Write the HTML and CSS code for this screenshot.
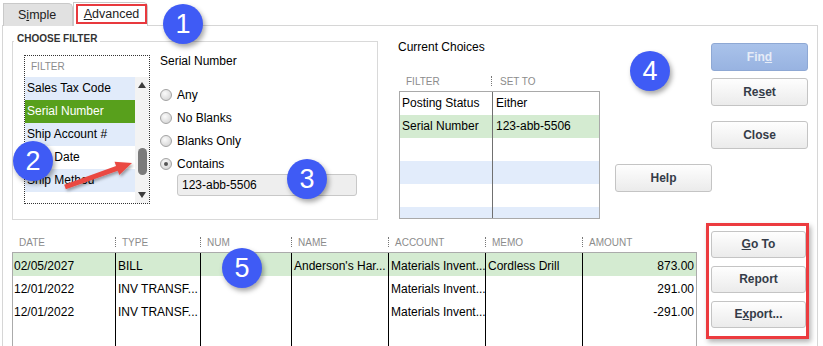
FILE: index.html
```html
<!DOCTYPE html>
<html>
<head>
<meta charset="utf-8">
<link rel="stylesheet" href="styles.css">
</head>
<body>
<div class="tabbar">
  <div class="tab tab-simple">S<u>i</u>mple</div>
  <div class="tab tab-adv"><span class="redmark"><u>A</u>dvanced</span></div>
</div>
<div class="panel">
  <div class="top">
    <div class="group">
      <div class="group-title">CHOOSE FILTER</div>
      <div class="group-body">
        <div class="filter-list">
          <div class="fl-head">FILTER</div>
          <div class="fl-main">
            <div class="fl-rows">
              <div class="fl-row blue">Sales Tax Code</div>
              <div class="fl-row sel">Serial Number</div>
              <div class="fl-row blue">Ship Account #</div>
              <div class="fl-row">Ship Date</div>
              <div class="fl-row blue">Ship Method</div>
            </div>
            <div class="scrollbar">
              <svg class="sb-arrow" width="8" height="6" viewBox="0 0 8 6"><polygon points="4,0 8,6 0,6" fill="#3c3c3c"/></svg>
              <div class="sb-thumb"></div>
              <svg class="sb-arrow sb-down" width="8" height="6" viewBox="0 0 8 6"><polygon points="0,0 8,0 4,6" fill="#3c3c3c"/></svg>
            </div>
          </div>
        </div>
        <div class="criteria">
          <div class="crit-title">Serial Number</div>
          <div class="radios">
            <div class="radio"><span class="radio-dot"></span>Any</div>
            <div class="radio"><span class="radio-dot"></span>No Blanks</div>
            <div class="radio"><span class="radio-dot"></span>Blanks Only</div>
            <div class="radio"><span class="radio-dot on"></span>Contains</div>
          </div>
          <div class="input">123-abb-5506</div>
        </div>
      </div>
    </div>
    <div class="choices">
      <div class="cc-title">Current Choices</div>
      <div class="cc-head">
        <div class="hcell cc-h1"><span>FILTER</span><span class="sep"></span></div>
        <div class="hcell cc-h2"><span>SET TO</span></div>
      </div>
      <div class="cc-table">
        <div class="cc-row"><div class="cc-c1">Posting Status</div><div class="cc-c2">Either</div></div>
        <div class="cc-row green"><div class="cc-c1">Serial Number</div><div class="cc-c2">123-abb-5506</div></div>
        <div class="cc-row"><div class="cc-c1"></div><div class="cc-c2"></div></div>
        <div class="cc-row blue"><div class="cc-c1"></div><div class="cc-c2"></div></div>
        <div class="cc-row"><div class="cc-c1"></div><div class="cc-c2"></div></div>
        <div class="cc-row blue"><div class="cc-c1"></div><div class="cc-c2"></div></div>
      </div>
    </div>
    <div class="actions">
      <div class="btn btn-find">Fin<u>d</u></div>
      <div class="btn btn-reset">Re<u>s</u>et</div>
      <div class="btn btn-close">Close</div>
      <div class="btn btn-help">Help</div>
    </div>
  </div>
  <div class="bottom">
    <div class="results">
      <div class="res-head">
        <div class="rh"><span>DATE</span><span class="sep"></span></div>
        <div class="rh"><span>TYPE</span><span class="sep"></span></div>
        <div class="rh"><span>NUM</span><span class="sep"></span></div>
        <div class="rh"><span>NAME</span><span class="sep"></span></div>
        <div class="rh"><span>ACCOUNT</span><span class="sep"></span></div>
        <div class="rh"><span>MEMO</span><span class="sep"></span></div>
        <div class="rh"><span>AMOUNT</span></div>
      </div>
      <div class="res-table">
        <div class="res-row green">
          <div>02/05/2027</div><div>BILL</div><div></div><div>Anderson's Har...</div><div>Materials Invent...</div><div>Cordless Drill</div><div>873.00</div>
        </div>
        <div class="res-row">
          <div>12/01/2022</div><div>INV TRANSF...</div><div></div><div></div><div>Materials Invent...</div><div></div><div>291.00</div>
        </div>
        <div class="res-row">
          <div>12/01/2022</div><div>INV TRANSF...</div><div></div><div></div><div>Materials Invent...</div><div></div><div>-291.00</div>
        </div>
        <div class="res-row filler">
          <div></div><div></div><div></div><div></div><div></div><div></div><div></div>
        </div>
      </div>
    </div>
    <div class="sidebox">
      <div class="btn side"><u>G</u>o To</div>
      <div class="btn side">Report</div>
      <div class="btn side">E<u>x</u>port...</div>
    </div>
  </div>
</div>

<svg class="arrow" width="823" height="346" viewBox="0 0 823 346">
  <defs>
    <filter id="sh" x="-20%" y="-20%" width="140%" height="160%">
      <feDropShadow dx="1.5" dy="2" stdDeviation="1.5" flood-color="#000" flood-opacity="0.35"/>
    </filter>
  </defs>
  <polygon filter="url(#sh)" fill="#ea4a43" points="64.15,184.64 116.05,166.04 114.53,161.8 132,163 119.27,175 117.75,170.76 65.85,189.36"/>
</svg>
<div class="callout c1">1</div>
<div class="callout c2">2</div>
<div class="callout c3">3</div>
<div class="callout c4">4</div>
<div class="callout c5">5</div>
</body>
</html>
```
FILE: styles.css
```css
* { box-sizing: border-box; }
html, body { margin: 0; padding: 0; }
body {
  width: 823px;
  height: 346px;
  overflow: hidden;
  position: relative;
  background: #fff;
  font-family: "Liberation Sans", Arial, sans-serif;
  font-size: 12px;
  color: #000;
}

/* tabs */
.tabbar { display: flex; align-items: flex-end; height: 26px; padding-left: 3px; }
.tab { border: 1px solid #c9c9c9; border-bottom: none; border-top-right-radius: 5px; font-size: 12.5px; color: #222; }
.tab-simple { width: 70px; height: 23px; background: #e1e1e1; padding-left: 14px; line-height: 22px; }
.tab-adv { width: 75px; height: 24px; background: #fff; padding: 1px 0 0 2px; position: relative; z-index: 1; }
.redmark { display: block; width: 71px; height: 20px; border: 2px solid #e8393e; line-height: 16px; text-align: center; }

/* panel */
.panel { margin: -1px 0 0 2px; width: 816px; height: 321px; border: 1px solid #d6d6d6; border-bottom: none; overflow: hidden; }
.top { display: flex; align-items: flex-start; height: 194px; }

.group { margin: 15px 0 0 9px; width: 366px; height: 179px; border: 1px solid #d9d9d9; flex: none; }
.group-title { margin: -9px 0 0 1px; padding: 0 3px; width: fit-content; background: #fff; font-weight: bold; font-size: 10px; line-height: 11px; color: #333; }
.group-body { display: flex; align-items: flex-start; margin-top: 11px; padding-left: 11px; }

.filter-list { width: 126px; height: 149px; border: 1px dotted #333; flex: none; }
.fl-head { height: 21px; line-height: 21px; padding-left: 6px; font-size: 10px; color: #8c8c8c; }
.fl-main { display: flex; height: 126px; }
.fl-rows { width: 110px; }
.fl-row { height: 23px; line-height: 23px; padding-left: 2px; white-space: nowrap; overflow: hidden; }
.fl-row.blue { background: #e1ebfa; }
.fl-row.sel { background: #58a01c; color: #fff; }
.scrollbar { width: 14px; background: #f3f3f3; display: flex; flex-direction: column; align-items: center; }
.sb-arrow { margin-top: 5px; flex: none; }
.sb-thumb { margin-top: 60px; width: 9px; height: 27px; border-radius: 4.5px; background: #7b7b7b; }
.sb-down { margin-top: auto; margin-bottom: 5px; }

.criteria { margin: -2px 0 0 10px; }
.crit-title { line-height: 16px; }
.radios { margin-top: 14px; }
.radio { display: flex; align-items: center; height: 23px; }
.radio-dot { width: 12px; height: 12px; border-radius: 50%; border: 1px solid #a3a3a3; background: radial-gradient(circle at 40% 35%, #fbfbfb, #cdcdcd); margin-right: 5px; flex: none; display: flex; align-items: center; justify-content: center; }
.radio-dot.on::after { content: ""; width: 4px; height: 4px; border-radius: 50%; background: #555; }
.input { margin: -1px 0 0 17px; width: 180px; height: 22px; background: #eee; border: 1px solid #c8c8c8; border-radius: 3px; padding-left: 4px; line-height: 20px; }

/* current choices */
.choices { margin: 13px 0 0 20px; width: 202px; flex: none; }
.cc-title { line-height: 16px; }
.cc-head { display: flex; margin: 16px 0 0 1px; height: 20px; }
.hcell { display: flex; align-items: center; justify-content: space-between; font-size: 10px; color: #8c8c8c; }
.cc-h1 { width: 93px; padding-left: 7px; }
.cc-h2 { padding-left: 8px; }
.sep { width: 1px; height: 10px; border-left: 1px dotted #777; }
.cc-table { margin-left: 1px; width: 201px; height: 128px; border: 1px solid #a9a9a9; overflow: hidden; }
.cc-row { display: flex; height: 23px; line-height: 23px; }
.cc-row.green { background: #d4ebd1; }
.cc-row.blue { background: #e2ecfb; }
.cc-c1 { width: 93px; border-right: 1px solid #707070; padding-left: 2px; white-space: nowrap; }
.cc-c2 { flex: 1; padding-left: 3px; white-space: nowrap; }

/* buttons */
.actions { margin: 17px 0 0 15px; width: 193px; display: flex; flex-direction: column; align-items: flex-end; flex: none; }
.btn { width: 97px; height: 28px; line-height: 26px; text-align: center; border: 1px solid #c4c4c4; border-radius: 3px; background: linear-gradient(#fefefe, #ebebeb); font-weight: bold; font-size: 12px; color: #353c48; }
.btn-find { background: linear-gradient(#a9c2ea, #98b3e1); border-color: #8ea8d4; color: #e6ecf7; }
.btn-reset { margin-top: 7px; }
.btn-close { margin-top: 15px; }
.btn-help { margin-top: 15px; align-self: flex-start; }

/* results */
.bottom { display: flex; align-items: flex-start; }
.results { margin: 12px 0 0 9px; width: 685px; flex: none; }
.res-head, .res-row { display: grid; grid-template-columns: 103px 85px 91px 97px 97px 97px 113px; }
.res-head { height: 20px; padding: 0 1px; }
.rh { display: flex; align-items: center; justify-content: space-between; padding-left: 6px; font-size: 10px; color: #8c8c8c; }
.res-table { height: 95px; border: 1px solid #ababab; border-bottom: none; overflow: hidden; }
.res-row { height: 23px; }
.res-row > div { border-right: 1px solid #000; padding: 3px 2px 0; line-height: 20px; white-space: nowrap; overflow: hidden; }
.res-row > div:first-child { padding-left: 1px; }
.res-row > div:last-child { border-right: none; text-align: right; }
.res-row.green { background: #d4ebd1; }
.res-row.filler { height: 30px; }

.sidebox { margin: 3px 0 0 9px; width: 103px; height: 116px; border: 3px solid #ec3b3f; padding: 5px 0 0 2px; box-shadow: 2px 3px 5px rgba(0,0,0,0.3); flex: none; }
.btn.side { width: 95px; height: 27px; line-height: 25px; margin-bottom: 8px; }

/* overlays */
.arrow { position: absolute; left: 0; top: 0; pointer-events: none; }
.callout { position: absolute; width: 40px; height: 40px; border-radius: 50%; background: #3f5bf5; color: #fff; font-size: 27px; line-height: 40px; text-align: center; box-shadow: 2px 3px 5px rgba(0,0,0,0.35); }
.c1 { left: 163px; top: 4px; }
.c2 { left: 13px; top: 141px; }
.c3 { left: 287px; top: 159px; }
.c4 { left: 630px; top: 51px; }
.c5 { left: 222px; top: 248px; }
```
